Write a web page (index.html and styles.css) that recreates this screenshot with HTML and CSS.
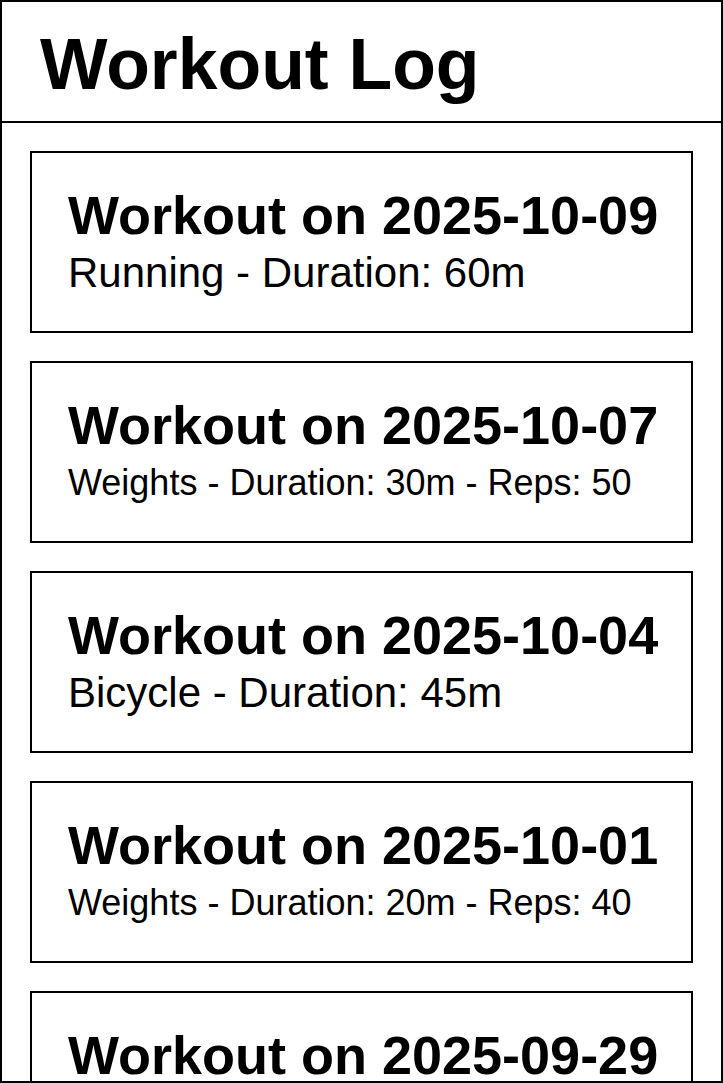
FILE: index.html
```html
<!DOCTYPE html>
<html lang="en">
<head>
<meta charset="utf-8">
<title>Workout Log</title>
<link rel="stylesheet" href="styles.css">
</head>
<body>
<div class="app">
  <header class="app-header">
    <h1 class="app-title">Workout Log</h1>
  </header>
  <main class="log-list">
    <section class="log-card">
      <h2 class="log-title">Workout on 2025-10-09</h2>
      <p class="log-detail">Running - Duration: 60m</p>
    </section>
    <section class="log-card">
      <h2 class="log-title">Workout on 2025-10-07</h2>
      <p class="log-detail log-detail--small">Weights - Duration: 30m - Reps: 50</p>
    </section>
    <section class="log-card">
      <h2 class="log-title">Workout on 2025-10-04</h2>
      <p class="log-detail">Bicycle - Duration: 45m</p>
    </section>
    <section class="log-card">
      <h2 class="log-title">Workout on 2025-10-01</h2>
      <p class="log-detail log-detail--small">Weights - Duration: 20m - Reps: 40</p>
    </section>
    <section class="log-card">
      <h2 class="log-title">Workout on 2025-09-29</h2>
      <p class="log-detail">Running - Duration: 30m</p>
    </section>
  </main>
</div>
</body>
</html>
```
FILE: styles.css
```css
html, body {
  margin: 0;
  padding: 0;
  background: #fff;
}

body {
  font-family: "Liberation Sans", Arial, Helvetica, sans-serif;
  color: #000;
}

.app {
  box-sizing: border-box;
  width: 723px;
  height: 1083px;
  border: 2px solid #000;
  overflow: hidden;
  display: flex;
  flex-direction: column;
}

.app-header {
  flex: none;
  padding: 21px 38px 16px;
  border-bottom: 2px solid #000;
}

.app-title {
  margin: 0;
  font-size: 71.5px;
  font-weight: 700;
  line-height: 1.15;
  white-space: nowrap;
}

.log-list {
  display: flex;
  flex-direction: column;
  gap: 28px;
  padding: 28px;
}

.log-card {
  flex: none;
  box-sizing: border-box;
  height: 182px;
  border: 2px solid #000;
  padding: 31px 20px 0 36px;
  overflow: hidden;
}

.log-title {
  margin: 0;
  font-size: 54px;
  font-weight: 700;
  line-height: 1.15;
  white-space: nowrap;
}

.log-detail {
  margin: 3px 0 0;
  font-size: 42px;
  line-height: 1.15;
  white-space: nowrap;
}

.log-detail--small {
  margin-top: 6px;
  font-size: 36px;
}
```
